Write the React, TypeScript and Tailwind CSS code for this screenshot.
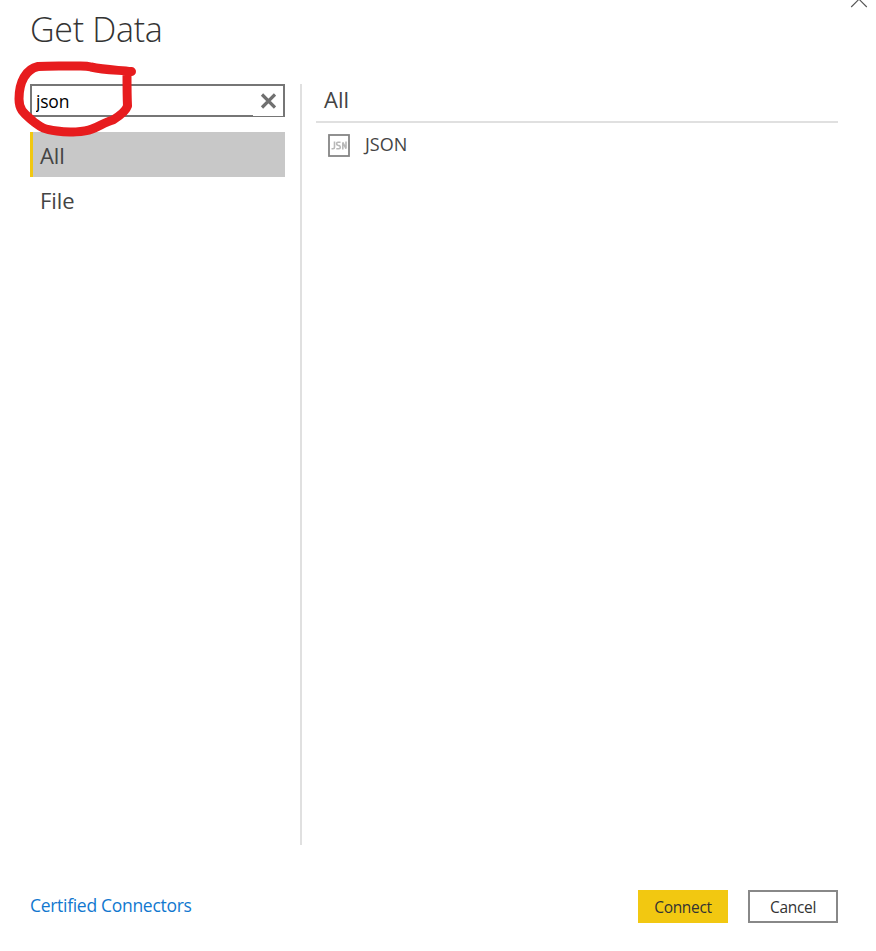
import React from "react";

const categories = ["All", "File"];

function CloseMark() {
  return (
    <svg className="block" width="20" height="8" viewBox="0 0 20 8" fill="none" stroke="#555" strokeWidth="1.1">
      <path d="M1.2 7 8.8 -0.6M16.8 7 9.2 -0.6" />
    </svg>
  );
}

function JsonIcon() {
  return (
    <svg className="block shrink-0" width="22" height="23" viewBox="0 0 22 23" fill="none">
      <rect x="1" y="1" width="20" height="21" stroke="#858585" strokeWidth="1.8" />
      <g stroke="#b8b8b8" strokeWidth="1.6">
        <path d="M6.500 7.500v5.700q0 1.600-1.500 1.600H3.500" />
        <path d="M12.500 8.300H10q-1.400 0-1.400 1.500 0 1.100 1.300 1.500l1.200.3q1.200.4 1.200 1.600 0 1.500-1.400 1.500H8.300" />
        <path d="M14.800 15.500V8.400L18 14.600V7.500" />
      </g>
    </svg>
  );
}

function RedMarker() {
  return (
    <svg className="pointer-events-none absolute left-0 top-0" width="150" height="150" viewBox="0 0 150 150" fill="none">
      <path
        d="M131.500 71.500C117 70 104 70 91 67C86 65.500 80 66 76 66C63 66 50 65.500 38 66.500C26 69 19 82 19 99C19 111 25 114 34 122C42 128 43 129 57 131C69 133 84 132 92 129C100 126 105 122 113 120C121 115 126 111 127.500 106C127 96 127 86 127 73"
        stroke="#e71c1e"
        strokeWidth="9"
        strokeLinecap="round"
        strokeLinejoin="round"
      />
    </svg>
  );
}

export default function App() {
  return (
    <div className="relative flex h-[951px] w-[876px] flex-col overflow-hidden bg-white font-['Open_Sans','Noto_Sans',sans-serif] text-[#444]">
      <header className="flex h-[84px] items-start justify-between pl-[30px] pr-[6px]">
        <h1 className="pt-[9px] text-[34px] font-light leading-[40px] tracking-[-0.3px] text-[#333]">Get Data</h1>
        <CloseMark />
      </header>
      <main className="flex h-[761px] pl-[30px] pr-[38px]">
        <aside className="w-[255px]">
          <div className="flex h-[33px] border-2 border-[#767676]">
            <input
              aria-label="Search"
              defaultValue="json"
              className="h-[29px] w-[221px] bg-white pl-1 pt-px text-[17.500px] tracking-[-0.2px] text-black outline-none"
            />
            <button aria-label="Clear" className="flex h-[30px] w-[30px] items-center justify-center bg-white">
              <svg width="16" height="16" viewBox="0 0 16 16" stroke="#707070" strokeWidth="3.2">
                <path d="M2 1.500 15 14.500M15 1.500 2 14.500" />
              </svg>
            </button>
          </div>
          <nav className="mt-[15px]">
            {categories.map((name, i) => (
              <div
                key={name}
                className={
                  "flex h-[45px] items-center border-l-[3px] pb-px pl-[7px] pt-[2px] text-[22px] tracking-[-0.1px] " +
                  (i === 0 ? "border-[#f2c811] bg-[#c8c8c8]" : "border-transparent")
                }
              >
                {name}
              </div>
            ))}
          </nav>
        </aside>
        <div className="ml-[15px] w-[2px] bg-[#e0e0e0]" />
        <section className="ml-[14px] w-[522px]">
          <h2 className="flex h-[39px] items-center border-b-2 border-[#e0e0e0] pb-[6px] pl-2 text-[22px]">All</h2>
          <div className="flex h-[45px] items-center pl-3">
            <JsonIcon />
            <span className="ml-[15px] pb-[2px] text-[18px]">JSON</span>
          </div>
        </section>
      </main>
      <footer className="mt-[45px] flex h-[33px] items-center pl-[30px] pr-[38px]">
        <a className="pb-[2px] text-[17.500px] tracking-[-0.3px] text-[#1178cf]">Certified Connectors</a>
        <button className="ml-auto h-[33px] w-[90px] bg-[#f2c811] pt-[2px] text-[15.500px] tracking-[-0.3px] text-[#333]">Connect</button>
        <button className="ml-5 h-[33px] w-[90px] border-2 border-[#888] pt-[2px] text-[15.500px] tracking-[-0.3px] text-[#333]">Cancel</button>
      </footer>
      <RedMarker />
    </div>
  );
}
